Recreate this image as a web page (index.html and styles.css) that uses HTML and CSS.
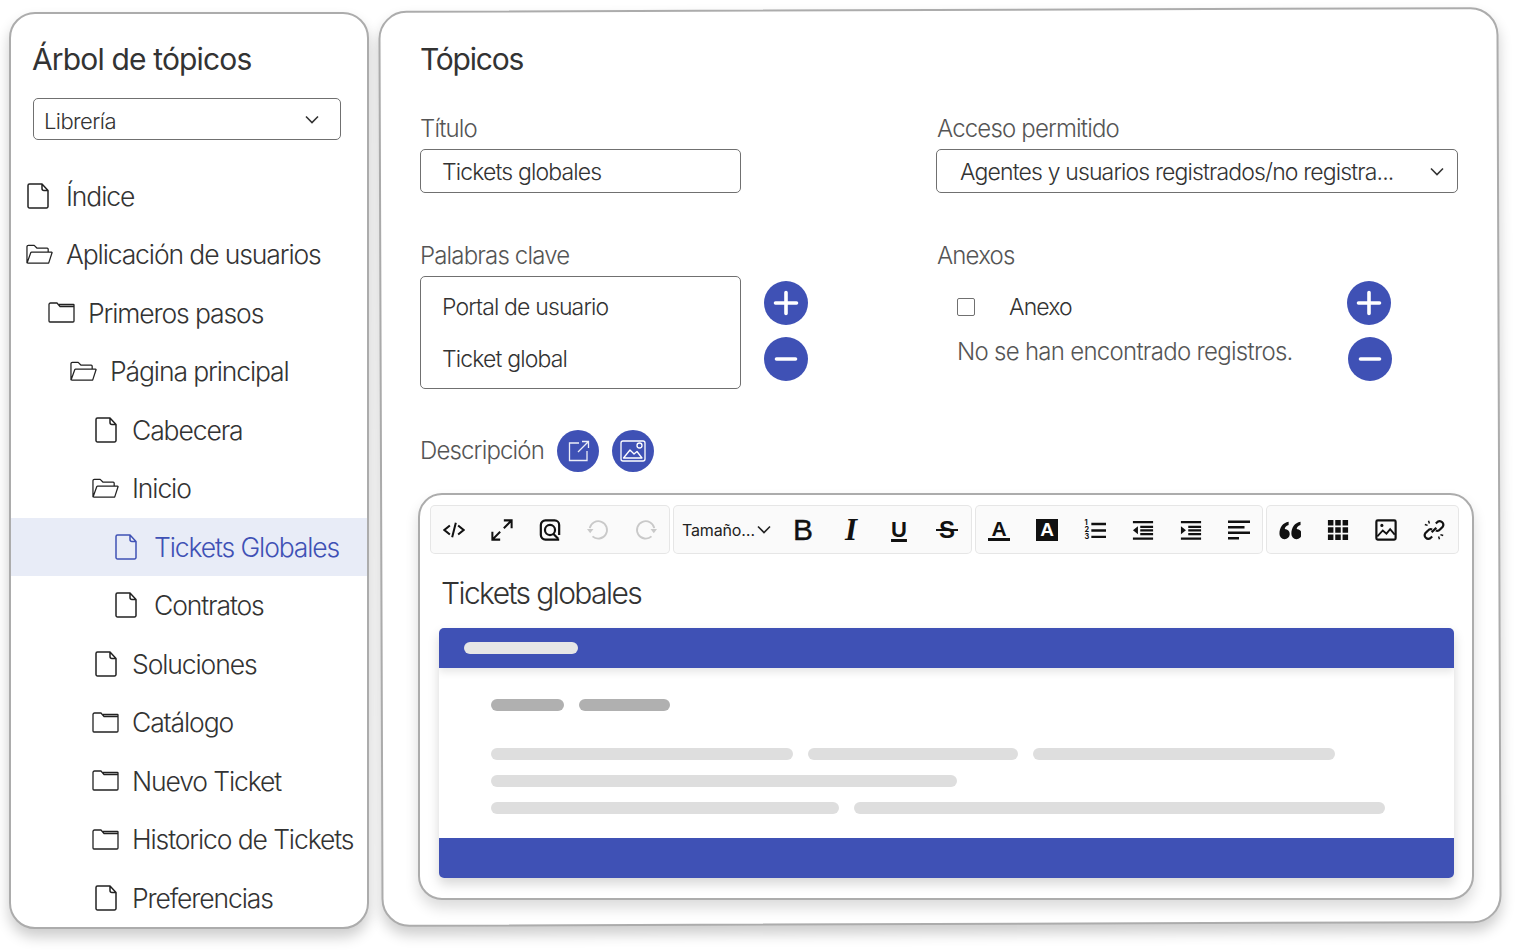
FILE: index.html
```html
<!DOCTYPE html>
<html lang="es">
<head>
  <meta charset="UTF-8">
  <meta name="viewport" content="width=device-width, initial-scale=1.0">
  <title>Tópicos</title>
  <link rel="stylesheet" href="styles.css">
</head>
<body>
  <!-- Iconos compartidos -->
  <svg class="defs" width="0" height="0" aria-hidden="true">
    <symbol id="i-doc" viewBox="0 0 22 26">
      <path d="M2.500 1h12.500l6 6.500v16a1.500 1.500 0 0 1-1.500 1.500h-17a1.500 1.500 0 0 1-1.500-1.500v-21a1.500 1.500 0 0 1 1.500-1.500z M15 1v4.500a2 2 0 0 0 2 2h4" fill="none" stroke="currentColor" stroke-width="1.500" stroke-linejoin="round"/>
    </symbol>
    <symbol id="i-folder" viewBox="0 0 27 21">
      <path d="M1 19V2.500A1.500 1.500 0 0 1 2.500 1h6.500l3 3.500h14v14.500a1 1 0 0 1-1 1H2a1 1 0 0 1-1-1z M11 2.500h14.500a.5.5 0 0 1 .5.500v1.500" fill="none" stroke="#222" stroke-width="1.300" stroke-linejoin="round"/>
    </symbol>
    <symbol id="i-open" viewBox="0 0 28 21">
      <path d="M1 19.500V2.500A1.500 1.500 0 0 1 2.500 1h6l3 3h10.500a1 1 0 0 1 1 1v3 M1 19.500l4-11a1 1 0 0 1 1-.5h20.500a.5.5 0 0 1 .5.700l-3.500 10.800H1.500" fill="none" stroke="#222" stroke-width="1.300" stroke-linejoin="round"/>
    </symbol>
    <symbol id="i-chev" viewBox="0 0 14 9">
      <path d="M1 1.500l6 6 6-6" fill="none" stroke="currentColor" stroke-width="1.600"/>
    </symbol>
    <symbol id="i-plus" viewBox="0 0 44 44">
      <path d="M22 11.500v21M11.500 22h21" fill="none" stroke="#fff" stroke-width="3.600" stroke-linecap="round"/>
    </symbol>
    <symbol id="i-minus" viewBox="0 0 44 44">
      <path d="M12.500 22h19" fill="none" stroke="#fff" stroke-width="3.600" stroke-linecap="round"/>
    </symbol>
  </svg>

  <div class="page">
    <!-- Panel izquierdo -->
    <aside class="tree-panel">
      <h2 class="tree-title">Árbol de tópicos</h2>
      <div class="select tree-select">
        <span>Librería</span>
        <svg class="chev"><use href="#i-chev"/></svg>
      </div>
      <ul class="tree">
        <li class="node lvl0"><svg class="ic-doc"><use href="#i-doc"/></svg><span>Índice</span></li>
        <li class="node lvl0"><svg class="ic-folder"><use href="#i-open"/></svg><span>Aplicación de usuarios</span></li>
        <li class="node lvl1"><svg class="ic-folder"><use href="#i-folder"/></svg><span>Primeros pasos</span></li>
        <li class="node lvl2"><svg class="ic-folder"><use href="#i-open"/></svg><span>Página principal</span></li>
        <li class="node lvl3"><svg class="ic-doc"><use href="#i-doc"/></svg><span>Cabecera</span></li>
        <li class="node lvl3"><svg class="ic-folder"><use href="#i-open"/></svg><span>Inicio</span></li>
        <li class="node lvl4 active"><svg class="ic-doc"><use href="#i-doc"/></svg><span>Tickets Globales</span></li>
        <li class="node lvl4"><svg class="ic-doc"><use href="#i-doc"/></svg><span>Contratos</span></li>
        <li class="node lvl3"><svg class="ic-doc"><use href="#i-doc"/></svg><span>Soluciones</span></li>
        <li class="node lvl3"><svg class="ic-folder"><use href="#i-folder"/></svg><span>Catálogo</span></li>
        <li class="node lvl3"><svg class="ic-folder"><use href="#i-folder"/></svg><span>Nuevo Ticket</span></li>
        <li class="node lvl3"><svg class="ic-folder"><use href="#i-folder"/></svg><span>Historico de Tickets</span></li>
        <li class="node lvl3"><svg class="ic-doc"><use href="#i-doc"/></svg><span>Preferencias</span></li>
      </ul>
    </aside>

    <!-- Panel principal -->
    <main class="main-panel">
      <h1 class="main-title">Tópicos</h1>

      <div class="form-grid">
        <div class="field">
          <label class="label">Título</label>
          <div class="input">Tickets globales</div>
        </div>
        <div class="field">
          <label class="label label-right">Acceso permitido</label>
          <div class="select access-select">
            <span>Agentes y usuarios registrados/no registra...</span>
            <svg class="chev"><use href="#i-chev"/></svg>
          </div>
        </div>
        <div class="field">
          <label class="label">Palabras clave</label>
          <div class="with-actions">
            <div class="keywords">
              <div>Portal de usuario</div>
              <div>Ticket global</div>
            </div>
            <div class="actions">
              <button class="round"><svg><use href="#i-plus"/></svg></button>
              <button class="round"><svg><use href="#i-minus"/></svg></button>
            </div>
          </div>
        </div>
        <div class="field">
          <label class="label label-right">Anexos</label>
          <div class="with-actions">
            <div class="attachments">
              <div class="attachment"><span class="check"></span><span>Anexo</span></div>
              <div class="empty">No se han encontrado registros.</div>
            </div>
            <div class="actions">
              <button class="round"><svg><use href="#i-plus"/></svg></button>
              <button class="round nudge"><svg><use href="#i-minus"/></svg></button>
            </div>
          </div>
        </div>
      </div>

      <div class="desc-row">
        <span class="label">Descripción</span>
        <button class="round small">
          <svg viewBox="0 0 42 42"><path d="M30 21v9.500H12.500V13H22M25 11.500h6.500V18M31.500 11.500L21 22" fill="none" stroke="#fff" stroke-width="1.300" opacity=".9"/></svg>
        </button>
        <button class="round small">
          <svg viewBox="0 0 42 42"><rect x="9" y="11" width="24" height="20" rx="2" fill="none" stroke="#fff" stroke-width="1.300"/><path d="M11.500 28l6.500-8 4 4 3-2.500 5 6.500z" fill="none" stroke="#fff" stroke-width="1.300" stroke-linejoin="round"/><circle cx="27.500" cy="15.500" r="2.500" fill="none" stroke="#fff" stroke-width="1.300"/></svg>
        </button>
      </div>

      <section class="editor">
        <div class="toolbar">
          <div class="tool-group">
            <span class="tool"><svg viewBox="0 0 24 24"><path d="M7.500 7L1.500 12l6 5M16.500 7l6 5-6 5M14 4l-4 16" fill="none" stroke="#111" stroke-width="2.200"/></svg></span>
            <span class="tool"><svg viewBox="0 0 24 24"><path d="M14 1.500h8.500V10M22.500 1.500l-8.500 8.500M1.500 14v8.500H10M1.500 22.500l8.500-8.500" fill="none" stroke="#111" stroke-width="2.200"/></svg></span>
            <span class="tool"><svg viewBox="0 0 24 24"><path d="M22 22.500H7a5 5 0 0 1-5-5V6.500a5 5 0 0 1 5-5h10a5 5 0 0 1 5 5v11" fill="none" stroke="#111" stroke-width="2.400"/><circle cx="12" cy="12" r="5.500" fill="none" stroke="#111" stroke-width="2.400"/><path d="M15.500 16l5.500 5.500" stroke="#111" stroke-width="2.400"/></svg></span>
            <span class="tool"><svg viewBox="0 0 24 24"><path d="M6 19a9.500 9.500 0 1 0-3-9" fill="none" stroke="#c9c9c9" stroke-width="2"/><path d="M0 11l3.500 4.500L7 11z" fill="#c9c9c9"/></svg></span>
            <span class="tool"><svg viewBox="0 0 24 24"><path d="M18 19a9.500 9.500 0 1 1 3-9" fill="none" stroke="#c9c9c9" stroke-width="2"/><path d="M17 11l3.500 4.500L24 11z" fill="#c9c9c9"/></svg></span>
          </div>
          <div class="tool-group format-group">
            <span class="size-select">Tamaño…<svg class="chev"><use href="#i-chev"/></svg></span>
            <span class="tool t-bold">B</span>
            <span class="tool t-italic">I</span>
            <span class="tool t-under">U</span>
            <span class="tool"><span class="t-strike">S</span></span>
          </div>
          <div class="tool-group">
            <span class="tool"><span class="t-color">A</span></span>
            <span class="tool"><span class="t-back">A</span></span>
            <span class="tool"><svg viewBox="0 0 24 24"><path d="M8 5.500h16M8 12.500h16M8 19.500h16" stroke="#111" stroke-width="2.600"/><text x="0.500" y="7" class="tiny">1</text><text x="0.500" y="14.500" class="tiny">2</text><text x="0.500" y="22" class="tiny">3</text></svg></span>
            <span class="tool"><svg viewBox="0 0 24 24"><path d="M1 3.500h22M9 8.500h14M9 12.500h14M9 16.500h14M1 21.500h22" stroke="#111" stroke-width="2.500"/><path d="M6.500 8v8.500L1 12.200z" fill="#111"/></svg></span>
            <span class="tool"><svg viewBox="0 0 24 24"><path d="M1 3.500h22M9 8.500h14M9 12.500h14M9 16.500h14M1 21.500h22" stroke="#111" stroke-width="2.500"/><path d="M1 8v8.500l5.500-4.300z" fill="#111"/></svg></span>
            <span class="tool"><svg viewBox="0 0 24 24"><path d="M0 3h24M0 9h18M0 15h24M0 21h12" stroke="#111" stroke-width="2.500"/></svg></span>
          </div>
          <div class="tool-group last-group">
            <span class="tool"><svg viewBox="0 0 24 24"><path d="M10.500 3v3.500C7.500 7.500 6.500 9 6.300 10.800a5.600 5.600 0 1 1-5.800 5.400C.5 9.500 4 4 10.500 3zM23.500 3v3.500c-3 1-4 2.500-4.200 4.300a5.600 5.600 0 1 1-5.800 5.400C13.500 9.500 17 4 23.500 3z" fill="#111"/></svg></span>
            <span class="tool"><svg viewBox="0 0 24 24"><path d="M1 1h6v6H1zM9 1h6v6H9zM17 1h6v6h-6zM1 9h6v6H1zM9 9h6v6H9zM17 9h6v6h-6zM1 17h6v6H1zM9 17h6v6H9zM17 17h6v6h-6z" fill="#111"/></svg></span>
            <span class="tool"><svg viewBox="0 0 24 24"><rect x="1.500" y="1.500" width="21" height="21" rx="1.500" fill="none" stroke="#111" stroke-width="2.400"/><path d="M2.500 19l6-6.500 4 3.500 4-5 5 6" fill="none" stroke="#111" stroke-width="2"/><circle cx="7.500" cy="7" r="1.700" fill="#111"/></svg></span>
            <span class="tool"><svg viewBox="0 0 24 24"><path d="M14 5l2-2a4 4 0 0 1 5.500 5.500l-3 3a4 4 0 0 1-4.500 1M10 19l-2 2a4 4 0 0 1-5.500-5.500l3-3a4 4 0 0 1 4.500-1M9.500 14.500l5-5" fill="none" stroke="#111" stroke-width="2.400"/><path d="M2 6l3 1M6 2l1 3M22 18l-3-1M18 22l-1-3" stroke="#111" stroke-width="1.600"/></svg></span>
          </div>
        </div>

        <h3 class="doc-title">Tickets globales</h3>

        <div class="doc-card">
          <div class="card-bar top-bar"><span class="pill pill-light w114"></span></div>
          <div class="card-body">
            <div class="pill-row heading-row"><span class="pill pill-dark w73"></span><span class="pill pill-dark w91"></span></div>
            <div class="pill-row"><span class="pill w302"></span><span class="pill w210"></span><span class="pill w302"></span></div>
            <div class="pill-row"><span class="pill w466"></span></div>
            <div class="pill-row"><span class="pill w348"></span><span class="pill w531"></span></div>
          </div>
          <div class="card-bar"></div>
        </div>
      </section>
    </main>
  </div>
</body>
</html>
```

FILE: styles.css
```css
body {
  margin: 0;
  background: #fff;
  color: #333;
  font-family: 'Inter', sans-serif;
  overflow: hidden;
}

ul, h1, h2, h3 {
  margin: 0;
  padding: 0;
  font-weight: 400;
}

.defs {
  position: absolute;
}

.page {
  display: flex;
  align-items: flex-start;
  gap: 11px;
  height: 951px;
  box-sizing: border-box;
  padding: 10px 0 0 9px;
  letter-spacing: -0.035em;
}

/* Panel izquierdo */
.tree-panel {
  width: 360px;
  height: 917px;
  box-sizing: border-box;
  margin-top: 2px;
  padding-top: 27px;
  background: #fff;
  border: 2px solid #acacac;
  border-radius: 26px;
  box-shadow: 0 8px 14px rgba(0, 0, 0, 0.2);
  overflow: hidden;
}

.tree-title, .main-title, .doc-title {
  font-size: 30px;
  line-height: 36px;
  letter-spacing: -0.04em;
}

.tree-title {
  margin-left: 21px;
  letter-spacing: -0.028em;
}

.select, .input, .keywords {
  box-sizing: border-box;
  border: 1px solid #707070;
  border-radius: 5px;
}

.select {
  display: flex;
  align-items: center;
  justify-content: space-between;
}

.chev {
  width: 14px;
  height: 9px;
  flex: none;
}

.tree-select {
  width: 308px;
  height: 42px;
  margin: 21px 0 0 22px;
  padding: 3px 21px 0 10px;
  font-size: 22px;
  font-weight: 300;
}

.tree-select .chev {
  margin-top: -3px;
}

.tree {
  list-style: none;
  margin-top: 26.500px;
}

.node {
  display: flex;
  align-items: center;
  height: 58.500px;
  font-size: 26.500px;
  font-weight: 300;
  letter-spacing: -0.042em;
  white-space: nowrap;
}

.node svg {
  flex: none;
}

.node .ic-doc {
  width: 22px;
  height: 26px;
  margin: 0 17px 0 2px;
  color: #222;
}

.lvl3 .ic-doc {
  margin: 0 15px 0 4px;
}

.node .ic-folder {
  width: 27px;
  height: 21px;
  margin: 0 13px 0 1px;
}

.lvl0 { padding-left: 14px; }
.lvl1 { padding-left: 36px; }
.lvl2 { padding-left: 58px; }
.lvl3 { padding-left: 80px; }
.lvl4 { padding-left: 102px; }

.active {
  background: #e8ecf7;
  color: #3f51b5;
}

.active .ic-doc {
  color: #3f51b5;
}

/* Panel principal: el marco va un poco girado */
.main-panel {
  position: relative;
  width: 1120px;
  height: 915px;
  box-sizing: border-box;
  padding: 31px 0 0 40px;
}

.main-panel::before {
  content: "";
  position: absolute;
  inset: -1px 0 0 0;
  background: #fff;
  border: 2px solid #acacac;
  border-radius: 28px;
  box-shadow: 0 8px 14px rgba(0, 0, 0, 0.2);
  transform: rotate(-0.2deg);
  z-index: -1;
}

.form-grid {
  display: grid;
  grid-template-columns: 321px 522px;
  column-gap: 195px;
  row-gap: 51px;
  margin-top: 40px;
}

.label {
  display: block;
  font-size: 24px;
  line-height: 24px;
  font-weight: 300;
  letter-spacing: -0.035em;
  color: #555;
  margin-bottom: 8px;
}

.label-right {
  margin-left: 1px;
}

.input, .access-select, .keywords, .attachment {
  font-size: 23px;
  font-weight: 300;
  letter-spacing: -0.037em;
}

.input, .access-select {
  height: 44px;
}

.input {
  display: flex;
  align-items: center;
  padding: 1px 0 0 21px;
}

.access-select {
  padding: 1px 13px 0 23px;
}

.access-select .chev {
  margin-top: -1px;
}

.with-actions {
  display: flex;
}

.keywords {
  width: 321px;
  height: 113px;
  flex: none;
  padding: 4px 0 0 21px;
  line-height: 52px;
}

.actions {
  display: flex;
  flex-direction: column;
  gap: 12px;
  margin: 5px 0 0 23px;
}

.round {
  width: 44px;
  height: 44px;
  padding: 0;
  border: none;
  border-radius: 50%;
  background: #3f51b5;
}

.round svg {
  display: block;
  width: 100%;
  height: 100%;
}

.nudge {
  margin-left: 1px;
}

.attachments {
  width: 411px;
  flex: none;
  box-sizing: border-box;
  padding: 5px 0 0 21px;
}

.attachments + .actions {
  margin-left: 0;
}

.attachment {
  display: flex;
  align-items: center;
  height: 52px;
}

.check {
  width: 16px;
  height: 16px;
  margin-right: 34px;
  border: 1px solid #707070;
  border-radius: 2px;
}

.empty {
  margin-top: 4px;
  font-size: 24px;
  font-weight: 300;
  letter-spacing: -0.03em;
  line-height: 30px;
  color: #555;
}

.desc-row {
  display: flex;
  align-items: center;
  gap: 13px;
  margin-top: 41px;
}

.desc-row .label {
  margin: 0;
}

.round.small {
  width: 42px;
  height: 42px;
}

/* Editor */
.editor {
  width: 1056px;
  height: 407px;
  box-sizing: border-box;
  margin: 21px 0 0 -2px;
  padding: 10px 0 0 10px;
  border: 2px solid #acacac;
  border-radius: 24px;
  background: #fff;
  box-shadow: 0 8px 14px rgba(0, 0, 0, 0.14);
}

.toolbar {
  display: flex;
  gap: 3px;
}

.tool-group {
  display: flex;
  align-items: center;
  height: 49px;
  background: #fafafa;
  box-shadow: inset 0 0 0 1px #e6e6e6;
  border-radius: 5px;
}

.format-group, .last-group {
  padding-right: 1px;
}

.tool {
  display: flex;
  align-items: center;
  justify-content: center;
  flex: none;
  width: 48px;
  color: #111;
  letter-spacing: 0;
}

.tool svg {
  width: 22px;
  height: 22px;
}

.tiny {
  font-size: 8px;
  font-weight: 700;
  letter-spacing: 0;
  fill: #111;
}

.size-select {
  display: flex;
  align-items: center;
  width: 106px;
  padding-left: 9px;
  box-sizing: border-box;
  font-size: 16px;
  letter-spacing: -0.01em;
  color: #222;
}

.size-select .chev {
  margin-left: 2px;
}

.t-bold {
  font: 400 30px 'Liberation Sans', sans-serif;
  -webkit-text-stroke: 0.4px #111;
}

.t-italic {
  font: italic 700 31px 'Liberation Serif', serif;
}

.t-under {
  font: 700 22px/22px 'Liberation Sans', sans-serif;
  text-decoration: underline;
  text-decoration-thickness: 3px;
  text-underline-offset: 2px;
}

.t-strike, .t-color {
  position: relative;
  display: block;
  width: 22px;
  height: 22px;
  text-align: center;
  font: 700 24px/22px 'Liberation Sans', sans-serif;
}

.t-color {
  font-size: 21px;
  line-height: 19px;
}

/* la raya es más ancha que la letra */
.t-strike::after, .t-color::after {
  content: "";
  position: absolute;
  left: 0;
  right: 0;
  background: #111;
}

.t-strike::after {
  top: 10px;
  height: 2px;
}

.t-color::after {
  bottom: 0;
  height: 3px;
}

.t-back {
  display: block;
  width: 22px;
  height: 22px;
  background: #111;
  color: #fff;
  text-align: center;
  font: 700 19px/22px 'Liberation Sans', sans-serif;
}

.doc-title {
  margin: 21px 0 0 11px;
  font-weight: 300;
  letter-spacing: -0.053em;
}

.doc-card {
  width: 1015px;
  height: 250px;
  margin: 17px 0 0 9px;
  display: flex;
  flex-direction: column;
  background: #fff;
  border-radius: 5px;
  box-shadow: 0 6px 12px rgba(0, 0, 0, 0.16);
  overflow: hidden;
}

.card-bar {
  display: flex;
  align-items: center;
  height: 40px;
  flex: none;
  padding-left: 25px;
  background: #3f51b5;
}

.top-bar {
  box-shadow: 0 4px 8px rgba(0, 0, 0, 0.1);
}

.card-body {
  flex: 1;
  padding: 31px 0 0 52px;
}

.pill-row {
  display: flex;
  gap: 15px;
  margin-bottom: 15px;
}

.heading-row {
  margin-bottom: 37px;
}

.pill {
  display: block;
  height: 12px;
  border-radius: 6px;
  background: #dedede;
}

.pill-dark { background: #b0b0b0; }
.pill-light { background: #e6e6e6; }

.w73 { width: 73px; }
.w91 { width: 91px; }
.w114 { width: 114px; }
.w210 { width: 210px; }
.w302 { width: 302px; }
.w348 { width: 348px; }
.w466 { width: 466px; }
.w531 { width: 531px; }
```
